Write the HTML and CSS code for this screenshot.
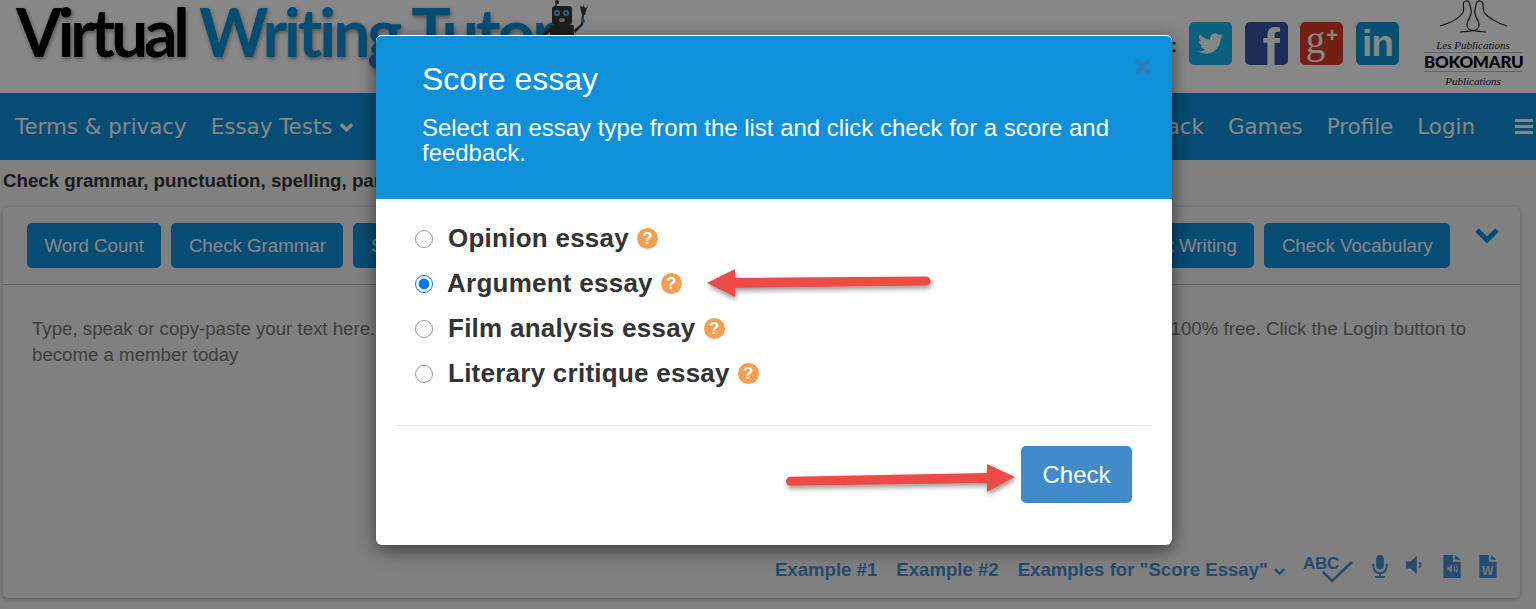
FILE: index.html
```html
<!DOCTYPE html>
<html lang="en">
<head>
<meta charset="utf-8">
<title>Virtual Writing Tutor</title>
<link rel="stylesheet" href="styles.css">
</head>
<body>
<header class="top">
  <div class="logo"><span class="logo-black">Virtual</span> <span class="logo-blue">Writing Tutor</span>
    <svg class="robot" viewBox="0 0 48 36" width="48" height="36"><path d="M15 1v6" stroke="#333" stroke-width="1.500"/><circle cx="16" cy="2" r="2" fill="#333"/><rect x="11" y="6" width="20" height="19" rx="3" fill="#3a3a3a"/><circle cx="16" cy="13" r="3" fill="#7fb6e0"/><circle cx="16" cy="13" r="1.300" fill="#333"/><circle cx="25" cy="13" r="3" fill="#7fb6e0"/><circle cx="25" cy="13" r="1.300" fill="#333"/><ellipse cx="21" cy="20" rx="3" ry="2" fill="#bbb"/><rect x="9" y="25" width="24" height="11" rx="2" fill="#3a3a3a"/><path d="M9 27L2 34l2 2 7-6zM33 30l7-6 1-9 2 0-1 10-8 8z" fill="#3a3a3a"/><path d="M39 6l1 5 1 4h3l1-4 2-5-2 2-2-1-1-3 0 3z" fill="#3a3a3a"/><circle cx="42" cy="21" r="2" fill="#2f8fe0"/></svg>
  </div>
  <div class="top-right">
    <span class="follow">Follow us:</span>
    <div class="socials">
      <span class="social tw"><svg viewBox="0 0 24 24" width="25" height="25"><path fill="#fff" d="M23.953 4.57a10 10 0 01-2.825.775 4.958 4.958 0 002.163-2.723c-.951.555-2.005.959-3.127 1.184a4.92 4.92 0 00-8.384 4.482C7.69 8.095 4.067 6.13 1.64 3.162a4.822 4.822 0 00-.666 2.475c0 1.71.87 3.213 2.188 4.096a4.904 4.904 0 01-2.228-.616v.06a4.923 4.923 0 003.946 4.827 4.996 4.996 0 01-2.212.085 4.936 4.936 0 004.604 3.417 9.867 9.867 0 01-6.102 2.105c-.39 0-.779-.023-1.17-.067a13.995 13.995 0 007.557 2.209c9.053 0 13.998-7.496 13.998-13.985 0-.21 0-.42-.015-.63A9.935 9.935 0 0024 4.59z"/></svg></span>
      <span class="social fb"><span class="fb-f">f</span></span>
      <span class="social gp">g<span class="plus">+</span></span>
      <span class="social li">in</span>
    </div>
    <div class="boko">
      <svg class="dancers" viewBox="0 0 98 33" width="98" height="33"><path d="M16 26C26 23 36 18 39 12 41 7 37 2 42 1 46 0 46 6 47 10 49 16 42 20 43 26 44 31 50 31 62 32M83 26C73 23 63 17 60 12 58 7 61 2 56 1 52 0 52 6 51 10 49 16 56 20 55 26 54 31 48 31 36 32" fill="none" stroke="#222" stroke-width="1.200"/></svg>
      <span class="boko-small">Les Publications</span>
      <span class="boko-name">BOKOMARU</span>
      <span class="boko-small">Publications</span>
    </div>
  </div>
</header>

<nav class="nav">
  <div class="nav-group">
    <a>Terms &amp; privacy</a>
    <a>Essay Tests <svg class="caret" viewBox="0 0 16 10" width="15" height="10"><path d="M2 2l6 6 6-6" fill="none" stroke="currentColor" stroke-width="3.6"/></svg></a>
  </div>
  <div class="nav-group nav-right">
    <a>Feedback</a>
    <a>Games</a>
    <a>Profile</a>
    <a>Login</a>
    <span class="burger"><i></i><i></i><i></i></span>
  </div>
</nav>

<p class="tagline">Check grammar, punctuation, spelling, paragraph structure and more.</p>

<main class="card">
  <div class="toolbar">
    <div class="btns">
      <a class="btn">Word Count</a>
      <a class="btn">Check Grammar</a>
      <a class="btn">Score Essay</a>
    </div>
    <div class="btns">
      <a class="btn">Check Writing</a>
      <a class="btn">Check Vocabulary</a>
    </div>
    <svg class="chev" viewBox="0 0 26 18" width="26" height="18"><path d="M3 3l10 10L23 3" fill="none" stroke="currentColor" stroke-width="5"/></svg>
  </div>
  <div class="editor">Type, speak or copy-paste your text here. Get an instant score and corrective feedback on your writing in seconds. Membership is always 100% free. Click the Login button to become a member today</div>
  <div class="tools">
    <a>Example #1</a>
    <a>Example #2</a>
    <a>Examples for "Score Essay" <svg class="caret-sm" viewBox="0 0 14 9" width="13" height="9"><path d="M2 2l5 5 5-5" fill="none" stroke="currentColor" stroke-width="2.6"/></svg></a>
    <span class="abc"><b>ABC</b><svg viewBox="0 0 31 22" width="31" height="22"><path d="M1 11l9 9L30 1" fill="none" stroke="currentColor" stroke-width="2.6"/></svg></span>
    <svg class="ico mic" viewBox="0 0 18 24" width="18" height="23"><rect x="5" y="0" width="8" height="15" rx="4" fill="currentColor"/><path d="M2 9v3a7 7 0 0014 0V9M9 19v3M4 23h10" fill="none" stroke="currentColor" stroke-width="2"/></svg>
    <svg class="ico spk" viewBox="0 0 20 20" width="18" height="18"><path d="M0 6h5l7-6v20l-7-6H0z" fill="currentColor"/><path d="M15 7q2 3 0 6" fill="none" stroke="currentColor" stroke-width="2"/></svg>
    <svg class="ico doc" viewBox="0 0 18 24" width="18" height="23"><path d="M0 0h10v7h8v17H0zM12 0l6 5h-6z" fill="currentColor"/><path d="M4 13h2l3-3v9l-3-3H4z" fill="#ddd"/><path d="M11 12q2 2.500 0 5M13 10.500q3 4 0 8" fill="none" stroke="#ddd" stroke-width="1.200"/></svg>
    <span class="ico docw"><svg viewBox="0 0 18 24" width="18" height="23"><path d="M0 0h10v7h8v17H0zM12 0l6 5h-6z" fill="currentColor"/></svg><b>W</b></span>
  </div>
</main>

<div class="overlay">
  <section class="modal">
    <div class="modal-head">
      <h2>Score essay</h2>
      <span class="close">×</span>
      <p>Select an essay type from the list and click check for a score and feedback.</p>
    </div>
    <div class="modal-body">
      <label class="opt"><input type="radio" name="essay"><span>Opinion essay</span><i class="q">?</i></label>
      <label class="opt opt-arg"><input type="radio" name="essay" checked><span>Argument essay</span><i class="q">?</i></label>
      <label class="opt"><input type="radio" name="essay"><span>Film analysis essay</span><i class="q">?</i></label>
      <label class="opt"><input type="radio" name="essay"><span>Literary critique essay</span><i class="q">?</i></label>
    </div>
    <div class="modal-foot"><button class="check" type="button">Check</button></div>
    <svg class="arrows" viewBox="0 0 796 510" width="796" height="510">
      <defs><filter id="sh" x="-10%" y="-60%" width="120%" height="240%"><feDropShadow dx="1" dy="3" stdDeviation="2.500" flood-color="#000" flood-opacity=".4"/></filter></defs>
      <path filter="url(#sh)" d="M331 248L359 234V243L550 241.500a4.500 4.500 0 010 9L359 253V262Z" fill="#ec4c46"/>
      <path filter="url(#sh)" d="M639 442L611 429V438L414.500 441.700a4.500 4.500 0 000 9L611 448V457Z" fill="#ec4c46"/>
    </svg>
  </section>
</div>
</body>
</html>
```
FILE: styles.css
```css
* { box-sizing: border-box; }
html, body { margin: 0; height: 609px; overflow: hidden; }
body { background: #f2f2f2; font-family: "Liberation Sans", Arial, sans-serif; color: #333; position: relative; }

.top { height: 93px; background: #fff; display: flex; justify-content: space-between; }
.logo { font-family: Lato, sans-serif; font-weight: 700; font-size: 66px; letter-spacing: -3px; word-spacing: 1px; line-height: 64px; padding-left: 16px; white-space: nowrap; text-shadow: 1px 2px 4px rgba(0,0,0,.4); position: relative; }
.logo-black { color: #000; letter-spacing: -4.2px; }
.logo-blue { color: #0f90d9; }
.robot { position: absolute; left: 541px; top: 0; }
.top-right { display: flex; align-items: flex-start; }
.follow { font-size: 18px; font-weight: 700; margin: 36px 12px 0 0; }
.socials { display: flex; gap: 12.7px; margin-top: 22px; }
.social { width: 43px; height: 43px; border-radius: 5px; display: flex; align-items: center; justify-content: center; color: #fff; font-weight: 700; overflow: hidden; }
.tw { background: #15b8ec; }
.fb { background: #3955a0; align-items: flex-end; padding-left: 10px; }
.fb-f { font-size: 52px; line-height: 52px; margin-bottom: -8px; }
.gp { background: #d93c22; font-family: "Liberation Serif", serif; font-size: 39px; font-weight: 400; line-height: 36px; padding-bottom: 8px; }
.plus { font-family: "Liberation Sans", sans-serif; font-weight: 700; font-size: 20px; margin-left: 1px; position: relative; top: -5px; }
.li { background: #0896d8; font-size: 37px; letter-spacing: -1px; }
.boko { width: 98px; margin: 0 14px 0 25px; display: flex; flex-direction: column; align-items: center; text-align: center; }
.dancers { display: block; }
.boko-small { font-family: "Liberation Serif", serif; font-style: italic; font-size: 11px; line-height: 14px; color: #222; margin-top: 5px; }
.boko-name { font-family: Lato, sans-serif; font-weight: 900; font-size: 17px; line-height: 18px; color: #000; border-top: 1px solid #bbb; border-bottom: 1px solid #bbb; width: 100%; letter-spacing: -.3px; }
.boko-name + .boko-small { margin-top: 2px; }

.nav { height: 67px; background: #0f90d9; display: flex; justify-content: space-between; align-items: center; padding: 0 3px 0 15px; color: #fff; font-family: "DejaVu Sans", sans-serif; font-size: 21.4px; }
.nav-group { display: flex; gap: 24px; align-items: center; }
.nav a { white-space: nowrap; }
.caret { vertical-align: 2px; }
.burger { display: flex; flex-direction: column; gap: 3px; width: 18px; margin-left: 16px; }
.burger i { display: block; height: 3px; background: #fff; }

.tagline { margin: 0; height: 47px; padding: 11px 0 0 3px; font-size: 18.7px; line-height: 20px; font-weight: 700; color: #333; white-space: nowrap; }

.card { width: 1517px; height: 391px; margin-left: 3px; background: #f2f2f2; border-radius: 5px; box-shadow: 0 1px 5px rgba(0,0,0,.3); display: flex; flex-direction: column; }
.toolbar { height: 78px; flex: none; display: flex; justify-content: space-between; align-items: flex-start; padding: 16px 20px 0 24px; border-bottom: 1px solid #bbb; }
.btns { display: flex; gap: 10px; }
.btns + .btns { margin-left: auto; }
.btn { height: 45px; display: flex; align-items: center; padding: 0 17.5px; background: #0f90d9; color: #fff; border-radius: 5px; font-size: 18.7px; white-space: nowrap; }
.chev { color: #0f90d9; margin: 4px 0 0 24px; }
.editor { flex: 1; padding: 31px 29px 0; font-size: 18.66px; line-height: 26px; color: #777; }
.tools { display: flex; align-items: center; justify-content: flex-end; height: 45px; padding: 0 23px 14px 0; color: #478ed4; font-size: 18.6px; font-weight: 700; }
.tools a { margin: 3px 19px 0 0; white-space: nowrap; }
.tools a:nth-child(3) { margin-right: 17px; }
.abc { position: relative; width: 50px; height: 26px; margin-right: 18px; }
.abc b { position: absolute; left: 0; top: 0; font-size: 17px; line-height: 16px; letter-spacing: -.3px; }
.abc svg { position: absolute; right: 0; top: 5px; }
.ico { display: block; flex: none; margin-bottom: 4px; }
.mic { margin-right: 17px; }
.spk { margin-right: 19px; margin-bottom: 8px; }
.doc { margin-right: 18px; }
.docw { position: relative; width: 18px; height: 23px; }
.docw svg { display: block; }
.docw b { position: absolute; left: 3px; top: 9px; color: #ddd; font-size: 12px; line-height: 14px; }

.overlay { position: absolute; inset: 0; background: rgba(0,0,0,.47); padding: 35px 0 0 376px; }
.modal { width: 796px; height: 510px; background: #fff; border-radius: 6px; box-shadow: 0 5px 18px rgba(0,0,0,.55); position: relative; display: flex; flex-direction: column; }
.modal-head { height: 164px; background: #0f90d9; color: #fff; padding: 25px 46px 0; border-radius: 6px 6px 0 0; border-top: 1px solid #fff; position: relative; flex: none; }
.modal-head h2 { margin: 0; font-size: 32px; font-weight: 400; line-height: 36px; }
.modal-head p { margin: 18px 0 0; font-size: 23.96px; line-height: 25px; }
.close { position: absolute; right: 20px; top: 16px; font-size: 30px; font-weight: 700; line-height: 30px; color: #2f7db8; -webkit-text-stroke: 1px #2f7db8; }
.modal-body { padding: 17px 0 0 19px; height: 227px; flex: none; border-bottom: 1px solid #e5e5e5; margin: 0 20px; display: flex; flex-direction: column; }
.opt { display: flex; align-items: center; height: 45px; font-size: 26px; font-weight: 700; color: #333; letter-spacing: .25px; white-space: nowrap; }
.opt input { width: 18px; height: 18px; margin: 0 15px 0 0; flex: none; }
.opt input:not(:checked) { opacity: .75; }
.opt-arg input { margin-right: 14px; }
.q { width: 21px; height: 21px; margin-left: 8px; border-radius: 50%; background: #f49f50; color: #fff; font-style: normal; font-size: 17px; line-height: 21px; text-align: center; letter-spacing: 0; }
.modal-foot { display: flex; justify-content: flex-end; padding: 20px 40px 0 0; }
.check { width: 111px; height: 57px; border: 0; border-radius: 5px; background: #428bca; color: #fff; font-family: "Liberation Sans", sans-serif; font-size: 24px; }
.arrows { position: absolute; left: 0; top: 0; pointer-events: none; }
```
